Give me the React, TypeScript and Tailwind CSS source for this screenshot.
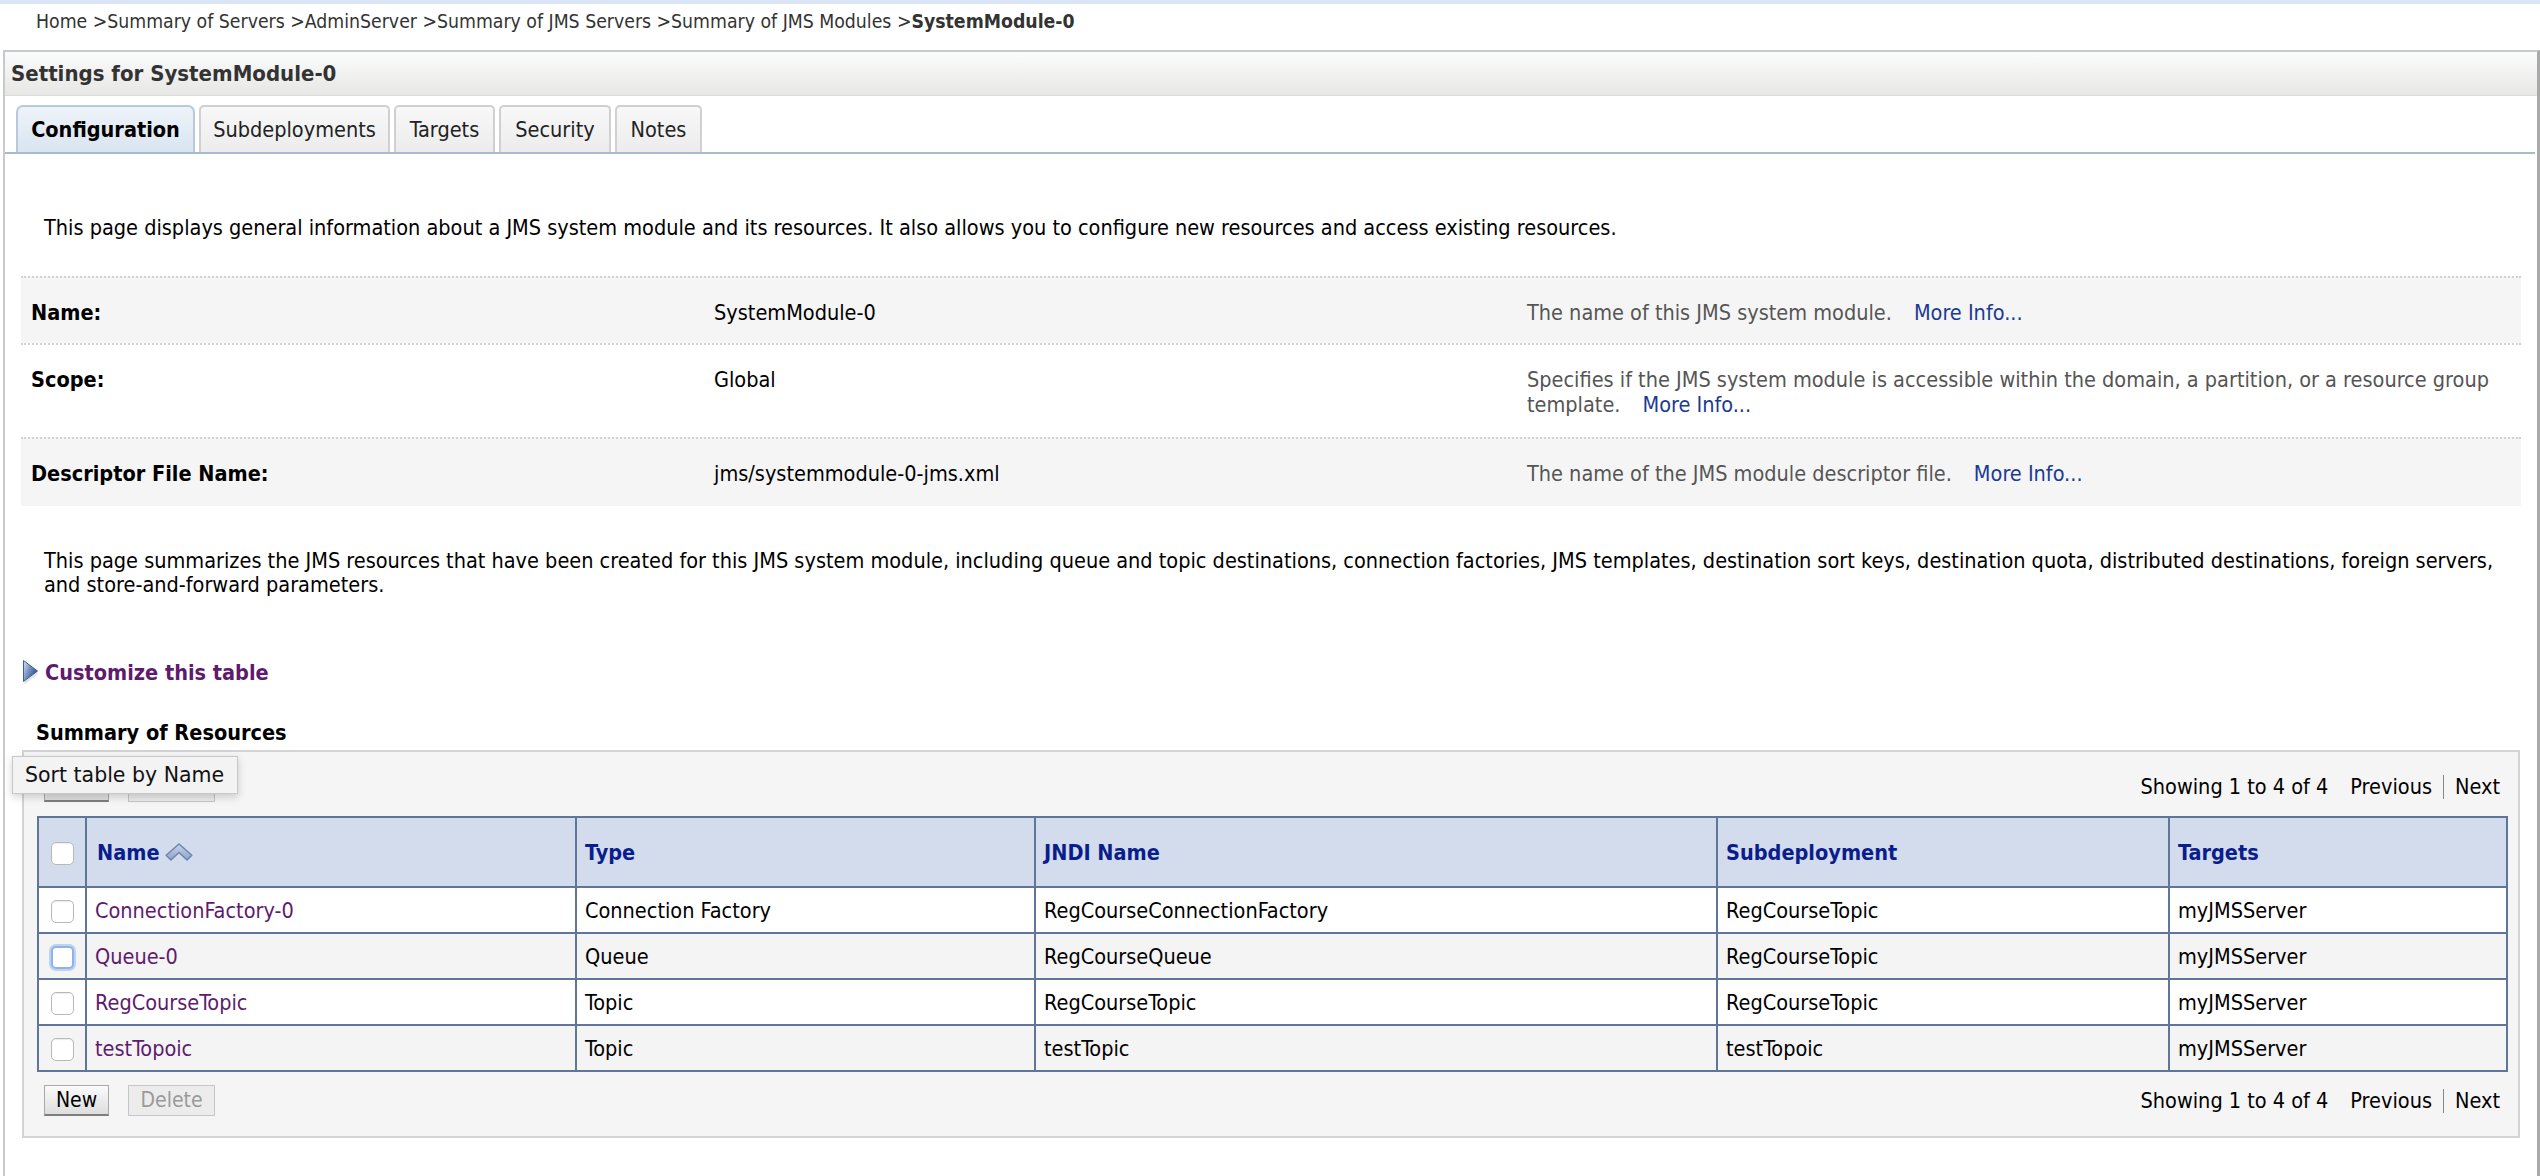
import React from "react";

function CustomizeIcon() {
  return (
    <svg width="18" height="26" viewBox="0 0 18 26">
      <defs>
        <linearGradient id="triG" x1="0" y1="0" x2="1" y2="0.6">
          <stop offset="0" stopColor="#dbe4f2" />
          <stop offset="0.45" stopColor="#7d98c6" />
          <stop offset="1" stopColor="#2c4c86" />
        </linearGradient>
      </defs>
      <path d="M2 3 L16 13 L2 24 Z" fill="#c8c8c8" opacity="0.5" transform="translate(0.5,1.5)" />
      <path d="M1.5 1.5 L15.5 12 L1.5 22.5 Z" fill="url(#triG)" stroke="#3d5d94" strokeWidth="1" strokeLinejoin="round" />
    </svg>
  );
}

function SortUpIcon() {
  return (
    <svg width="30" height="20" viewBox="0 0 28 18">
      <defs>
        <linearGradient id="sortG" x1="0" y1="0" x2="0" y2="1">
          <stop offset="0" stopColor="#c9d5ea" />
          <stop offset="1" stopColor="#8ea3c8" />
        </linearGradient>
      </defs>
      <path
        d="M2 12 L14 1.5 L26 12 L21.5 16.5 L14 9.5 L6.5 16.5 Z"
        fill="url(#sortG)"
        stroke="#6d84ad"
        strokeWidth="1.4"
        strokeLinejoin="round"
      />
    </svg>
  );
}

function Checkbox({ focused = false }: { focused?: boolean }) {
  return (
    <span
      className={
        focused
          ? "inline-block w-[23px] h-[23px] rounded-[5px] bg-white border-2 border-[#8fb3e8] shadow-[0_0_0_2px_#bcd3f3]"
          : "inline-block w-[23px] h-[23px] rounded-[5px] bg-white border border-[#b9b9b9] shadow-[inset_0_1px_1px_rgba(0,0,0,0.08)]"
      }
    />
  );
}

const rows = [
  { name: "ConnectionFactory-0", type: "Connection Factory", jndi: "RegCourseConnectionFactory", sub: "RegCourseTopic", targets: "myJMSServer", focused: false },
  { name: "Queue-0", type: "Queue", jndi: "RegCourseQueue", sub: "RegCourseTopic", targets: "myJMSServer", focused: true },
  { name: "RegCourseTopic", type: "Topic", jndi: "RegCourseTopic", sub: "RegCourseTopic", targets: "myJMSServer", focused: false },
  { name: "testTopoic", type: "Topic", jndi: "testTopic", sub: "testTopoic", targets: "myJMSServer", focused: false },
];

function Buttons() {
  return (
    <div className="flex items-center gap-[19px]">
      <button className="w-[65px] h-[31px] bg-gradient-to-b from-[#fafafa] to-[#dedede] border border-[#a9a9a9] border-b-2 border-b-[#7d7d7d] text-black text-[21px] leading-none">
        New
      </button>
      <button className="w-[87px] h-[31px] bg-[#ececec] border border-[#c6c6c6] text-[#9a9a9a] text-[21px] leading-none">
        Delete
      </button>
    </div>
  );
}

function Pager() {
  return (
    <div className="flex items-center text-black">
      <span>Showing 1 to 4 of 4</span>
      <span className="ml-[22px]">Previous</span>
      <span className="mx-[11px] w-px h-[24px] bg-[#888]" />
      <span>Next</span>
    </div>
  );
}

export default function App() {
  const cellB = "border-2 border-[#5f7698]";
  return (
    <div className="relative min-h-[1176px] bg-white text-[21.5px] leading-[25px] text-black font-['DejaVu_Sans_Condensed','DejaVu_Sans',sans-serif] overflow-hidden">
      <div className="h-[4px] bg-[#d9e5f5]" />
      <div className="h-[34px] flex items-center pl-[36px] text-[#333] text-[19.3px] whitespace-nowrap">
        <span>Home &gt;Summary of Servers &gt;AdminServer &gt;Summary of JMS Servers &gt;Summary of JMS Modules &gt;</span>
        <span className="font-bold">SystemModule-0</span>
      </div>
      <div className="mt-[12px] ml-[3px] border-l-2 border-t-2 border-[#c6cacd] border-r-[3px] border-r-[#a9a9a9] min-h-[1126px]">
        {/* header */}
        <div className="h-[44px] flex items-center pl-[6px] bg-gradient-to-b from-[#fbfcfc] to-[#e7e7e5] border-b border-[#dcdcdc]">
          <span className="font-bold text-[#333] text-[22px]">Settings for SystemModule-0</span>
        </div>
        {/* tabs */}
        <div className="pt-[9px] pl-[11px] mr-[2px] flex items-end gap-[4px] border-b-2 border-[#a6bad0]">
          <div className="w-[179px] h-[47px] flex items-center justify-center rounded-t-[7px] border-2 border-b-0 border-[#b8c9db] bg-gradient-to-b from-[#eef3f9] to-[#d9e5f1] font-bold">
            Configuration
          </div>
          <div className="w-[191px] h-[47px] flex items-center justify-center rounded-t-[5px] border-2 border-b-0 border-[#d0d0d0] bg-gradient-to-b from-[#f8f8f8] to-[#ececec] text-[#222]">
            Subdeployments
          </div>
          <div className="w-[101px] h-[47px] flex items-center justify-center rounded-t-[5px] border-2 border-b-0 border-[#d0d0d0] bg-gradient-to-b from-[#f8f8f8] to-[#ececec] text-[#222]">
            Targets
          </div>
          <div className="w-[112px] h-[47px] flex items-center justify-center rounded-t-[5px] border-2 border-b-0 border-[#d0d0d0] bg-gradient-to-b from-[#f8f8f8] to-[#ececec] text-[#222]">
            Security
          </div>
          <div className="w-[87px] h-[47px] flex items-center justify-center rounded-t-[5px] border-2 border-b-0 border-[#d0d0d0] bg-gradient-to-b from-[#f8f8f8] to-[#ececec] text-[#222]">
            Notes
          </div>
        </div>

        {/* intro */}
        <p className="pt-[61px] pl-[39px] whitespace-nowrap">
          This page displays general information about a JMS system module and its resources. It also allows you to configure new resources and access existing resources.
        </p>

        {/* properties */}
        <div className="mt-[36px] ml-[16px] mr-[16px]">
          <div className="grid grid-cols-[683px_813px_1fr] bg-[#f5f5f5] border-t-2 border-dotted border-[#d2d2d2] pt-[22px] pb-[18px]">
            <div className="pl-[10px] font-bold">Name:</div>
            <div className="pl-[10px]">SystemModule-0</div>
            <div className="pl-[10px] text-[#555]">
              The name of this JMS system module.<span className="ml-[22px] text-[#1b3a93]">More Info...</span>
            </div>
          </div>
          <div className="grid grid-cols-[683px_813px_1fr] bg-white border-t-2 border-dotted border-[#d2d2d2] pt-[22px] pb-[20px]">
            <div className="pl-[10px] font-bold">Scope:</div>
            <div className="pl-[10px]">Global</div>
            <div className="pl-[10px] text-[#555]">
              Specifies if the JMS system module is accessible within the domain, a partition, or a resource group
              <br />
              template.<span className="ml-[22px] text-[#1b3a93]">More Info...</span>
            </div>
          </div>
          <div className="grid grid-cols-[683px_813px_1fr] bg-[#f5f5f5] border-t-2 border-dotted border-[#d2d2d2] pt-[22px] pb-[20px]">
            <div className="pl-[10px] font-bold">Descriptor File Name:</div>
            <div className="pl-[10px]">jms/systemmodule-0-jms.xml</div>
            <div className="pl-[10px] text-[#555]">
              The name of the JMS module descriptor file.<span className="ml-[22px] text-[#1b3a93]">More Info...</span>
            </div>
          </div>
        </div>

        {/* summary text */}
        <p className="mt-[43px] pl-[39px] leading-[24px] whitespace-nowrap">
          This page summarizes the JMS resources that have been created for this JMS system module, including queue and topic destinations, connection factories, JMS templates, destination sort keys, destination quota, distributed destinations, foreign servers,
          <br />
          and store-and-forward parameters.
        </p>

        {/* customize */}
        <div className="mt-[62px] ml-[17px] flex items-center gap-[5px]">
          <CustomizeIcon />
          <span className="font-bold text-[#5e1b6e]">Customize this table</span>
        </div>

        <div className="mt-[35px] pl-[31px] font-bold">Summary of Resources</div>

        {/* table container */}
        <div className="mt-[5px] ml-[17px] mr-[17px] bg-[#f5f5f5] border-2 border-[#d3d3d3] pt-[19px] pb-[20px]">
          <div className="flex items-center justify-between pl-[20px] pr-[18px]">
            <Buttons />
            <Pager />
          </div>
          <div className="mt-[14px] ml-[13px] mr-[10px]">
            <table className="w-full border-collapse table-fixed">
              <colgroup>
                <col className="w-[48px]" />
                <col className="w-[490px]" />
                <col className="w-[459px]" />
                <col className="w-[682px]" />
                <col className="w-[452px]" />
                <col />
              </colgroup>
              <thead>
                <tr className="h-[70px] bg-[#d3dcec] text-[#0a1d8c] font-bold text-left">
                  <th className={cellB + " text-center align-middle"}>
                    <span className="inline-flex align-middle"><Checkbox /></span>
                  </th>
                  <th className={cellB + " pl-[10px] font-bold"}>
                    <span className="inline-flex items-center gap-[4px]">
                      Name <SortUpIcon />
                    </span>
                  </th>
                  <th className={cellB + " pl-[8px] font-bold"}>Type</th>
                  <th className={cellB + " pl-[8px] font-bold"}>JNDI Name</th>
                  <th className={cellB + " pl-[8px] font-bold"}>Subdeployment</th>
                  <th className={cellB + " pl-[8px] font-bold"}>Targets</th>
                </tr>
              </thead>
              <tbody>
                {rows.map((r, i) => (
                  <tr key={r.name} className={i % 2 === 1 ? "h-[46px] bg-[#f4f4f4]" : "h-[46px] bg-white"}>
                    <td className={cellB + " text-center align-middle"}>
                      <span className="inline-flex align-middle"><Checkbox focused={r.focused} /></span>
                    </td>
                    <td className={cellB + " pl-[8px] text-[#5e1b6e]"}>{r.name}</td>
                    <td className={cellB + " pl-[8px]"}>{r.type}</td>
                    <td className={cellB + " pl-[8px]"}>{r.jndi}</td>
                    <td className={cellB + " pl-[8px]"}>{r.sub}</td>
                    <td className={cellB + " pl-[8px]"}>{r.targets}</td>
                  </tr>
                ))}
              </tbody>
            </table>
          </div>
          <div className="mt-[13px] flex items-center justify-between pl-[20px] pr-[18px]">
            <Buttons />
            <Pager />
          </div>
        </div>
      </div>

      {/* tooltip */}
      <div className="absolute left-[12px] top-[756px] w-[226px] h-[38px] flex items-center pl-[12px] bg-[#f3f3f3] border border-[#c8c8c8] shadow-[0_3px_8px_rgba(0,0,0,0.18)] text-[#111] text-[20.5px] font-['DejaVu_Sans',sans-serif] whitespace-nowrap">
        Sort table by Name
      </div>
    </div>
  );
}
